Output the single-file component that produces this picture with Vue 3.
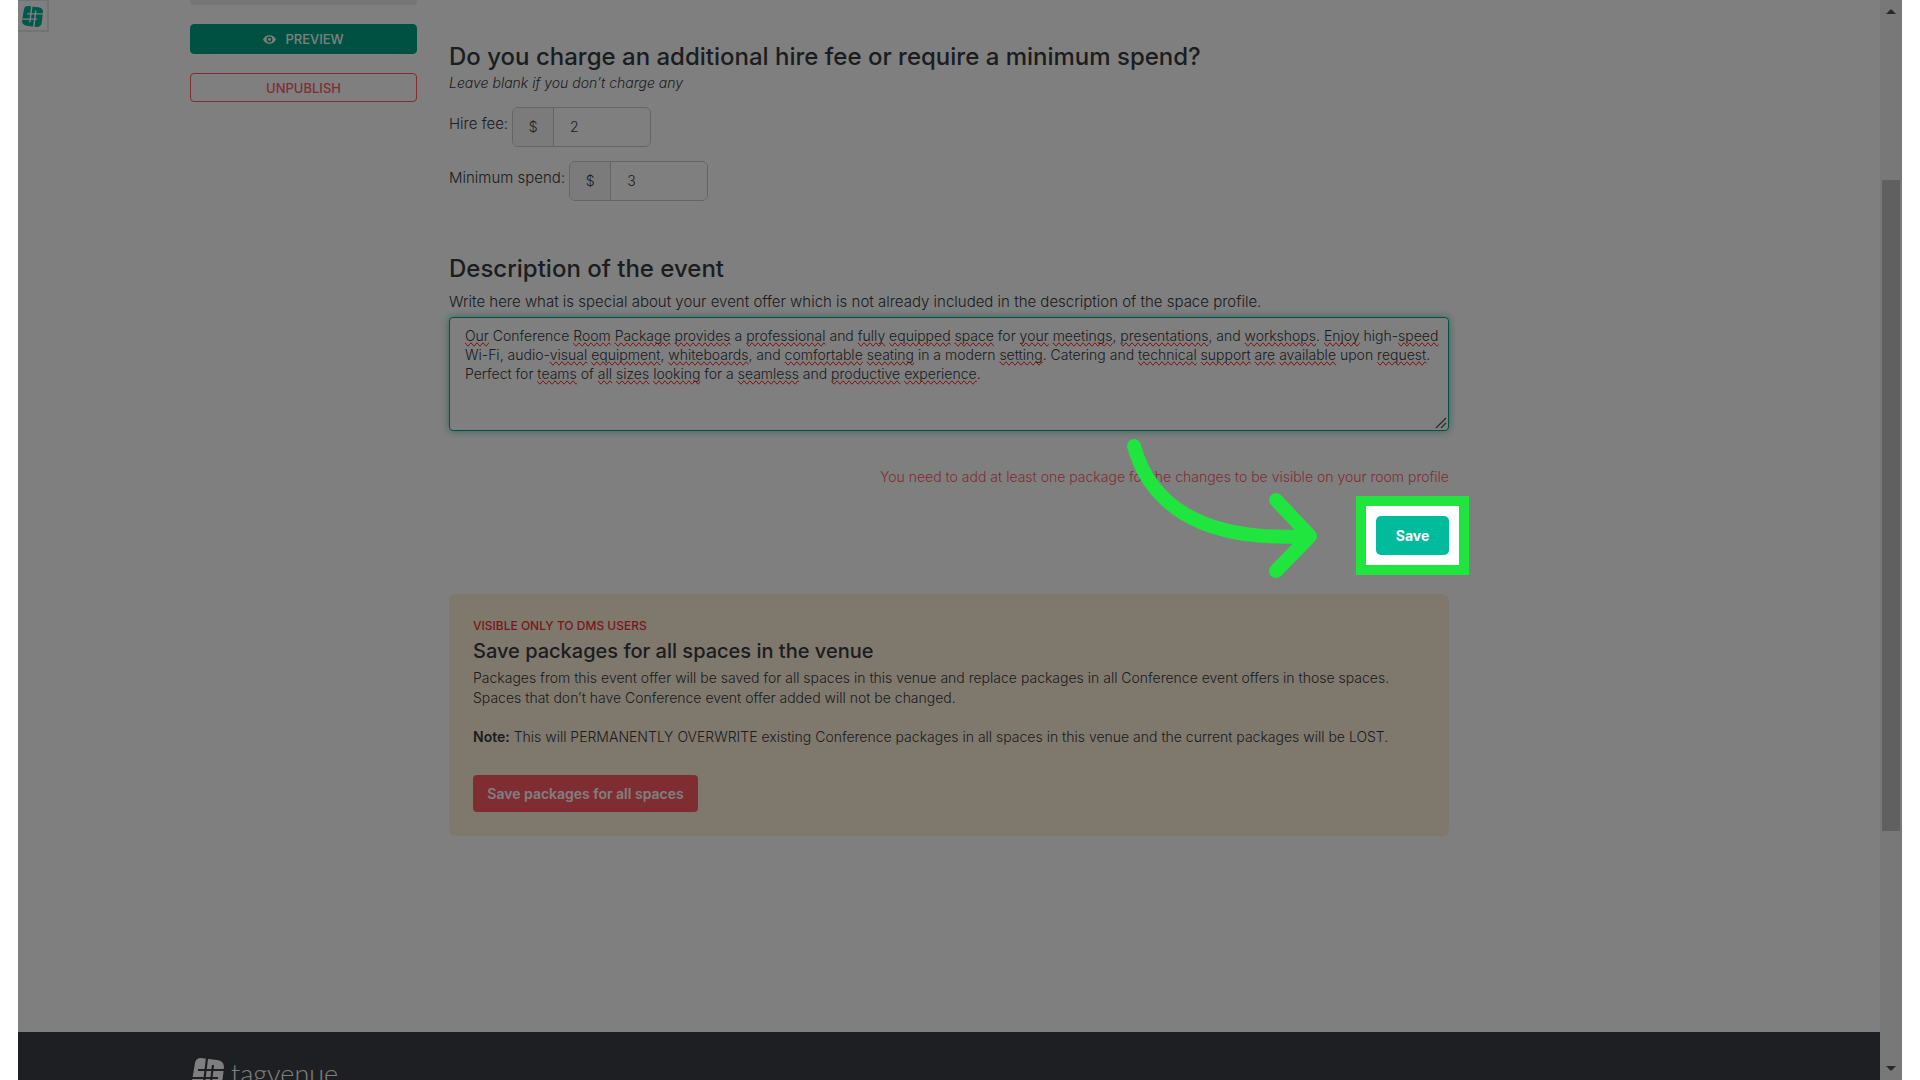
<script setup>
import { ref } from 'vue'

const hireFee = ref('2')
const minimumSpend = ref('3')

const description = ref(
  'Our Conference Room Package provides a professional and fully equipped space for your meetings, presentations, and workshops. Enjoy high-speed Wi-Fi, audio-visual equipment, whiteboards, and comfortable seating in a modern setting. Catering and technical support are available upon request. Perfect for teams of all sizes looking for a seamless and productive experience.'
)

const flagged = new Set(
  'Our Room Package provides professional fully equipped space your meetings presentations workshops Enjoy speed visual equipment whiteboards comfortable seating setting technical support are available request teams all sizes looking seamless productive experience'.split(' ')
)

const pieces = (text) =>
  text.split(/([A-Za-z]+)/).map((part) => ({ part, wrong: flagged.has(part) }))
</script>

<template>
  <div class="frame">
    <div class="page">
      <button class="extension" type="button" aria-label="Open Tagvenue">
        <svg viewBox="0 0 32 32" width="21" height="21" aria-hidden="true">
          <path fill="#00b294" d="M9 0 L25 2 Q32 3 32 9 L30 26 Q29 32 22 32 L7 30 Q0 29 0 23 L3 5 Q4 0 9 0Z" />
          <path stroke="#fff" stroke-width="2.2" fill="none" d="M15 0 L12 25 M21 7 L18 32 M8 12 H32 M0 20 H23" />
        </svg>
      </button>

      <main class="layout">
        <aside class="sidebar">
          <div class="side-stub"></div>
          <button class="side-btn preview" type="button">
            <svg viewBox="0 0 24 16" width="13" height="9" aria-hidden="true">
              <path fill="#fff" fill-rule="evenodd" d="M12 0C6 0 2 4 0 8c2 4 6 8 12 8s10-4 12-8C22 4 18 0 12 0Zm0 2.600a5.400 5.400 0 1 1 0 10.800a5.400 5.400 0 0 1 0-10.800Z" />
              <circle cx="12" cy="8" r="2.600" fill="#fff" />
            </svg>
            PREVIEW
          </button>
          <button class="side-btn unpublish" type="button">UNPUBLISH</button>
        </aside>

        <form class="content" @submit.prevent>
          <section class="fees">
            <h2>Do you charge an additional hire fee or require a minimum spend?</h2>
            <p class="hint">Leave blank if you don’t charge any</p>
            <div class="fee-row">
              <label for="hire-fee">Hire fee:</label>
              <div class="money">
                <span class="addon">$</span>
                <input id="hire-fee" v-model="hireFee" type="text" />
              </div>
            </div>
            <div class="fee-row">
              <label for="minimum-spend">Minimum spend:</label>
              <div class="money">
                <span class="addon">$</span>
                <input id="minimum-spend" v-model="minimumSpend" type="text" />
              </div>
            </div>
          </section>

          <section class="describe">
            <h2>Description of the event</h2>
            <label class="lead" for="description">Write here what is special about your event offer which is not already included in the description of the space profile.</label>
            <div class="editor">
              <textarea id="description" v-model="description" spellcheck="false"></textarea>
              <div class="spelling" aria-hidden="true"><span v-for="(p, i) in pieces(description)" :key="i" :class="{ wrong: p.wrong }">{{ p.part }}</span></div>
              <svg class="grip" viewBox="0 0 12 12" width="12" height="12" aria-hidden="true">
                <path d="M1 11 L11 1 M6 11 L11 6" stroke="#555" stroke-width="1.300" />
              </svg>
            </div>
          </section>

          <p class="warning">You need to add at least one package for the changes to be visible on your room profile</p>

          <div class="actions">
            <div class="spot">
              <div class="ring"></div>
              <button class="save" type="submit">Save</button>
              <svg class="arrow" viewBox="0 0 200 150" width="200" height="150" aria-hidden="true">
                <path d="M10 12 C24 63 68 109 184 102 M152 66 L186 102 L152 137" fill="none" stroke="#1fe53e" stroke-width="14" stroke-linecap="round" stroke-linejoin="round" />
              </svg>
            </div>
          </div>

          <section class="card">
            <p class="tag">VISIBLE ONLY TO DMS USERS</p>
            <h3>Save packages for all spaces in the venue</h3>
            <p>Packages from this event offer will be saved for all spaces in this venue and replace packages in all Conference event offers in those spaces.<br />Spaces that don’t have Conference event offer added will not be changed.</p>
            <p class="note"><strong>Note:</strong> This will PERMANENTLY OVERWRITE existing Conference packages in all spaces in this venue and the current packages will be LOST.</p>
            <button class="save-all" type="button">Save packages for all spaces</button>
          </section>
        </form>
      </main>

      <footer class="footer">
        <a class="brand" href="#">
          <svg viewBox="0 0 32 32" width="32" height="32" aria-hidden="true">
            <path fill="#fff" d="M9 0 L25 2 Q32 3 32 9 L30 26 Q29 32 22 32 L7 30 Q0 29 0 23 L3 5 Q4 0 9 0Z" />
            <path stroke="#3c3e46" stroke-width="2.200" fill="none" d="M15 0 L12 25 M21 7 L18 32 M6 12 H32 M0 20 H26" />
          </svg>
          <span>tagvenue</span>
        </a>
      </footer>
    </div>

    <div class="scrollbar" aria-hidden="true">
      <svg viewBox="0 0 22 22" width="22" height="22"><path d="M6 14 L11 9 L16 14Z" fill="#505050" /></svg>
      <div class="before"></div>
      <div class="thumb"></div>
      <div class="after"></div>
      <svg viewBox="0 0 22 22" width="22" height="22"><path d="M6 8 L11 13 L16 8Z" fill="#505050" /></svg>
    </div>
  </div>
</template>

<style>
body {
  background: #fff;
}
</style>

<style scoped>
* {
  box-sizing: border-box;
}

.frame {
  position: relative;
  display: flex;
  height: 100vh;
  margin: 0 18px;
  overflow: hidden;
  background: #fff;
  color: #36393e;
  font: 300 14px/20px Inter, "Liberation Sans", sans-serif;
}

.page {
  display: flex;
  flex: 1;
  flex-direction: column;
  min-width: 0;
}

h2,
h3,
p {
  margin: 0;
}

button,
input,
textarea {
  font: inherit;
  color: inherit;
}

.extension {
  position: absolute;
  top: 0;
  left: 0;
  display: flex;
  width: 31px;
  height: 32px;
  padding: 5px 4px;
  border: solid #e6e6e6;
  border-width: 1px 2px 2px 0;
  background: #fff;
}

.layout {
  display: grid;
  flex: 1;
  grid-template-columns: 227px minmax(0, 1000px) 227px;
  column-gap: 32px;
  justify-content: center;
  min-height: 0;
}

.sidebar {
  display: flex;
  flex-direction: column;
  gap: 19px;
}

.side-stub {
  height: 5px;
  border-radius: 0 0 4px 4px;
  background: #ececec;
}

.side-btn {
  display: flex;
  align-items: center;
  justify-content: center;
  gap: 9px;
  height: 29px;
  padding: 0;
  border: 1px solid #00a385;
  border-radius: 4px;
  font-size: 13px;
  font-weight: 500;
}

.side-btn.preview {
  height: 30px;
  background: #00a385;
  color: #fff;
}

.unpublish {
  border-color: #ff5a66;
  background: #fff;
  color: #ff5a66;
}

h2 {
  color: #363a40;
  font-size: 24px;
  font-weight: 500;
  line-height: 32px;
}

.fees {
  padding-top: 41px;
}

.hint {
  font-style: italic;
}

.fee-row {
  display: flex;
  gap: 4px;
  margin-top: 14px;
}

.fee-row label {
  padding-top: 7px;
  font-size: 15px;
}

.money {
  display: flex;
  width: 139px;
  height: 40px;
  overflow: hidden;
  border: 1px solid #c4c8d0;
  border-radius: 6px;
}

.addon {
  width: 41px;
  border-right: 1px solid #c4c8d0;
  background: #f6f6f7;
  line-height: 38px;
  text-align: center;
}

.money input {
  flex: 1;
  min-width: 0;
  padding: 0 16px;
  border: 0;
  background: #fff;
}

.describe {
  padding-top: 52px;
}

.lead {
  display: block;
  margin-top: 7px;
  font-size: 15px;
}

.editor {
  position: relative;
  height: 114px;
  margin-top: 5px;
}

.editor textarea,
.spelling {
  display: block;
  width: 100%;
  height: 100%;
  margin: 0;
  padding: 8px 6px 8px 15px;
  border: 1px solid #00a385;
  border-radius: 4px;
  font-size: 14px;
  line-height: 19px;
  white-space: pre-wrap;
  overflow: hidden;
}

.editor textarea {
  resize: none;
  outline: 0;
  background: #fff;
  box-shadow: 0 0 8px rgba(0, 163, 133, 0.6);
}

.spelling {
  position: absolute;
  inset: 0;
  border-color: transparent;
  color: transparent;
  pointer-events: none;
}

.wrong {
  text-decoration-line: spelling-error;
}

.grip {
  position: absolute;
  right: 2px;
  bottom: 2px;
}

.warning {
  margin-top: 36px;
  color: #ff5a66;
  text-align: right;
}

.actions {
  display: flex;
  justify-content: flex-end;
  margin-top: 29px;
}

.spot {
  position: relative;
}

.ring {
  position: absolute;
  z-index: 1;
  inset: -20px;
  border: 10px solid #1fe53e;
  background: #fff;
  box-shadow: 0 0 0 200vmax rgba(0, 0, 0, 0.5);
}

.save {
  position: relative;
  z-index: 2;
  display: block;
  width: 73px;
  height: 39px;
  padding: 0;
  border: 0;
  border-radius: 5px;
  background: #00bb9c;
  color: #fff;
  font-weight: 700;
}

.arrow {
  position: absolute;
  z-index: 2;
  top: -82px;
  right: 125px;
  pointer-events: none;
}

.card {
  margin-top: 39px;
  padding: 22px 24px 24px;
  border-radius: 6px;
  background: #fff2da;
}

.tag {
  color: #f0303c;
  font-size: 12px;
  font-weight: 500;
}

h3 {
  margin-bottom: 2px;
  color: #363a40;
  font-size: 20px;
  font-weight: 500;
  line-height: 30px;
}

.note {
  margin-top: 19px;
}

.note strong {
  font-weight: 600;
}

.save-all {
  display: block;
  width: 225px;
  height: 37px;
  margin-top: 28px;
  padding: 0;
  border: 0;
  border-radius: 4px;
  background: #ff5a66;
  color: #fff;
  font-weight: 600;
}

.footer {
  display: flex;
  justify-content: center;
  flex: none;
  height: 48px;
  overflow: hidden;
  background: #3c3e46;
}

.brand {
  display: flex;
  gap: 7px;
  width: 1518px;
  padding: 26px 2px 0;
  color: #fff;
  font: 300 27px/32px Lato, sans-serif;
  text-decoration: none;
}

.scrollbar {
  display: flex;
  flex-direction: column;
  flex: none;
  width: 22px;
  background: #f1f1f1;
}

.scrollbar svg {
  flex: none;
}

.before {
  flex: 158;
}

.thumb {
  flex: 651;
  margin: 0 2px;
  background: #c1c1c1;
}

.after {
  flex: 227;
}
</style>
